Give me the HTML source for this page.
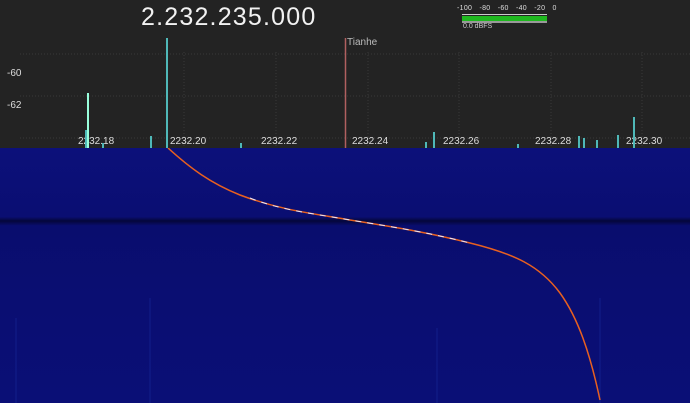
<!DOCTYPE html>
<html><head><meta charset="utf-8"><style>
html,body{margin:0;padding:0;width:690px;height:403px;overflow:hidden;background:#222;font-family:"Liberation Sans",sans-serif}
.top{position:absolute;left:0;top:0;width:690px;height:148px;background:#232323}
.freq{position:absolute;left:141px;top:3px;font-size:25px;color:#f2f2f2;letter-spacing:1.2px}
.lbl{position:absolute;color:#ddd;font-size:10px}
.wf{position:absolute;left:0;top:148px;width:690px;height:255px;background:linear-gradient(180deg,#0c107a 0%,#0a0e72 27%,#04063a 28.6%,#090d6e 30.5%,#0a0e72 60%,#0a0f76 100%)}
.b{position:absolute;background:#4fb8b8;bottom:255px}
</style></head><body>
<div class="top"></div>
<div class="freq">2.232.235.000</div>
<div style="position:absolute;left:457px;top:5px;font-size:7px;color:#ddd;letter-spacing:0.3px;word-spacing:5px">-100 -80 -60 -40 -20 0</div>
<div style="position:absolute;left:462px;top:14px;width:85px;height:2px;border-top:1px solid #ccc"></div>
<div style="position:absolute;left:462px;top:16px;width:85px;height:5px;background:#1fb81f;border-bottom:2px solid #999"></div>
<div style="position:absolute;left:463px;top:23px;font-size:7px;color:#ccc">0.0 dBFS</div>
<svg style="position:absolute;left:0;top:0" width="690" height="148">
<g stroke="#3a3a3a" stroke-dasharray="1,2" stroke-width="1">
<line x1="20" y1="54" x2="690" y2="54"/><line x1="20" y1="96" x2="690" y2="96"/><line x1="20" y1="138" x2="690" y2="138"/>
<line x1="184" y1="52" x2="184" y2="148"/><line x1="276" y1="52" x2="276" y2="148"/><line x1="368" y1="52" x2="368" y2="148"/><line x1="459" y1="52" x2="459" y2="148"/><line x1="551" y1="52" x2="551" y2="148"/><line x1="642" y1="52" x2="642" y2="148"/>
</g>
<line x1="345.5" y1="38" x2="345.5" y2="148" stroke="#b06060" stroke-width="1.5"/>
</svg>
<div class="lbl" style="left:347px;top:37px;color:#bbb;font-size:10px">Tianhe</div>
<div class="lbl" style="left:7px;top:68px">-60</div>
<div class="lbl" style="left:7px;top:100px">-62</div>
<div class="lbl" style="left:78px;top:136px">2232.18</div>
<div class="lbl" style="left:170px;top:136px">2232.20</div>
<div class="lbl" style="left:261px;top:136px">2232.22</div>
<div class="lbl" style="left:352px;top:136px">2232.24</div>
<div class="lbl" style="left:443px;top:136px">2232.26</div>
<div class="lbl" style="left:535px;top:136px">2232.28</div>
<div class="lbl" style="left:626px;top:136px">2232.30</div>
<div class="b" style="left:166px;width:2px;height:110px"></div>
<div class="b" style="left:87px;width:2px;height:55px;background:#9fd"></div>
<div class="b" style="left:85px;width:2px;height:18px"></div>
<div class="b" style="left:150px;width:2px;height:12px"></div>
<div class="b" style="left:102px;width:2px;height:5px"></div>
<div class="b" style="left:433px;width:2px;height:16px"></div>
<div class="b" style="left:425px;width:2px;height:6px"></div>
<div class="b" style="left:633px;width:2px;height:31px"></div>
<div class="b" style="left:617px;width:2px;height:13px"></div>
<div class="b" style="left:578px;width:2px;height:12px"></div>
<div class="b" style="left:583px;width:2px;height:10px"></div>
<div class="b" style="left:596px;width:2px;height:8px"></div>
<div class="b" style="left:517px;width:2px;height:4px"></div>
<div class="b" style="left:240px;width:2px;height:5px"></div>
<div class="wf"></div>
<svg style="position:absolute;left:0;top:148px" width="690" height="255">
<g stroke="#1a2a9a" stroke-width="1" opacity="0.6">
<line x1="16" y1="170" x2="16" y2="255"/><line x1="437" y1="180" x2="437" y2="255"/><line x1="600" y1="150" x2="600" y2="255"/><line x1="150" y1="150" x2="150" y2="255"/>
</g>
<path d="M168,0 C190,20 210,35 240,47 C280,62 310,65 350,72 C400,80 430,85 470,95 C515,106 540,118 560,145 C578,170 590,205 600,252" fill="none" stroke="#e86020" stroke-width="1.5"/>
<path d="M250,50 C280,62 310,65 350,72 C400,80 430,85 470,95" fill="none" stroke="#e8e8ff" stroke-width="1" stroke-dasharray="6,6"/>
</svg>
</body></html>
